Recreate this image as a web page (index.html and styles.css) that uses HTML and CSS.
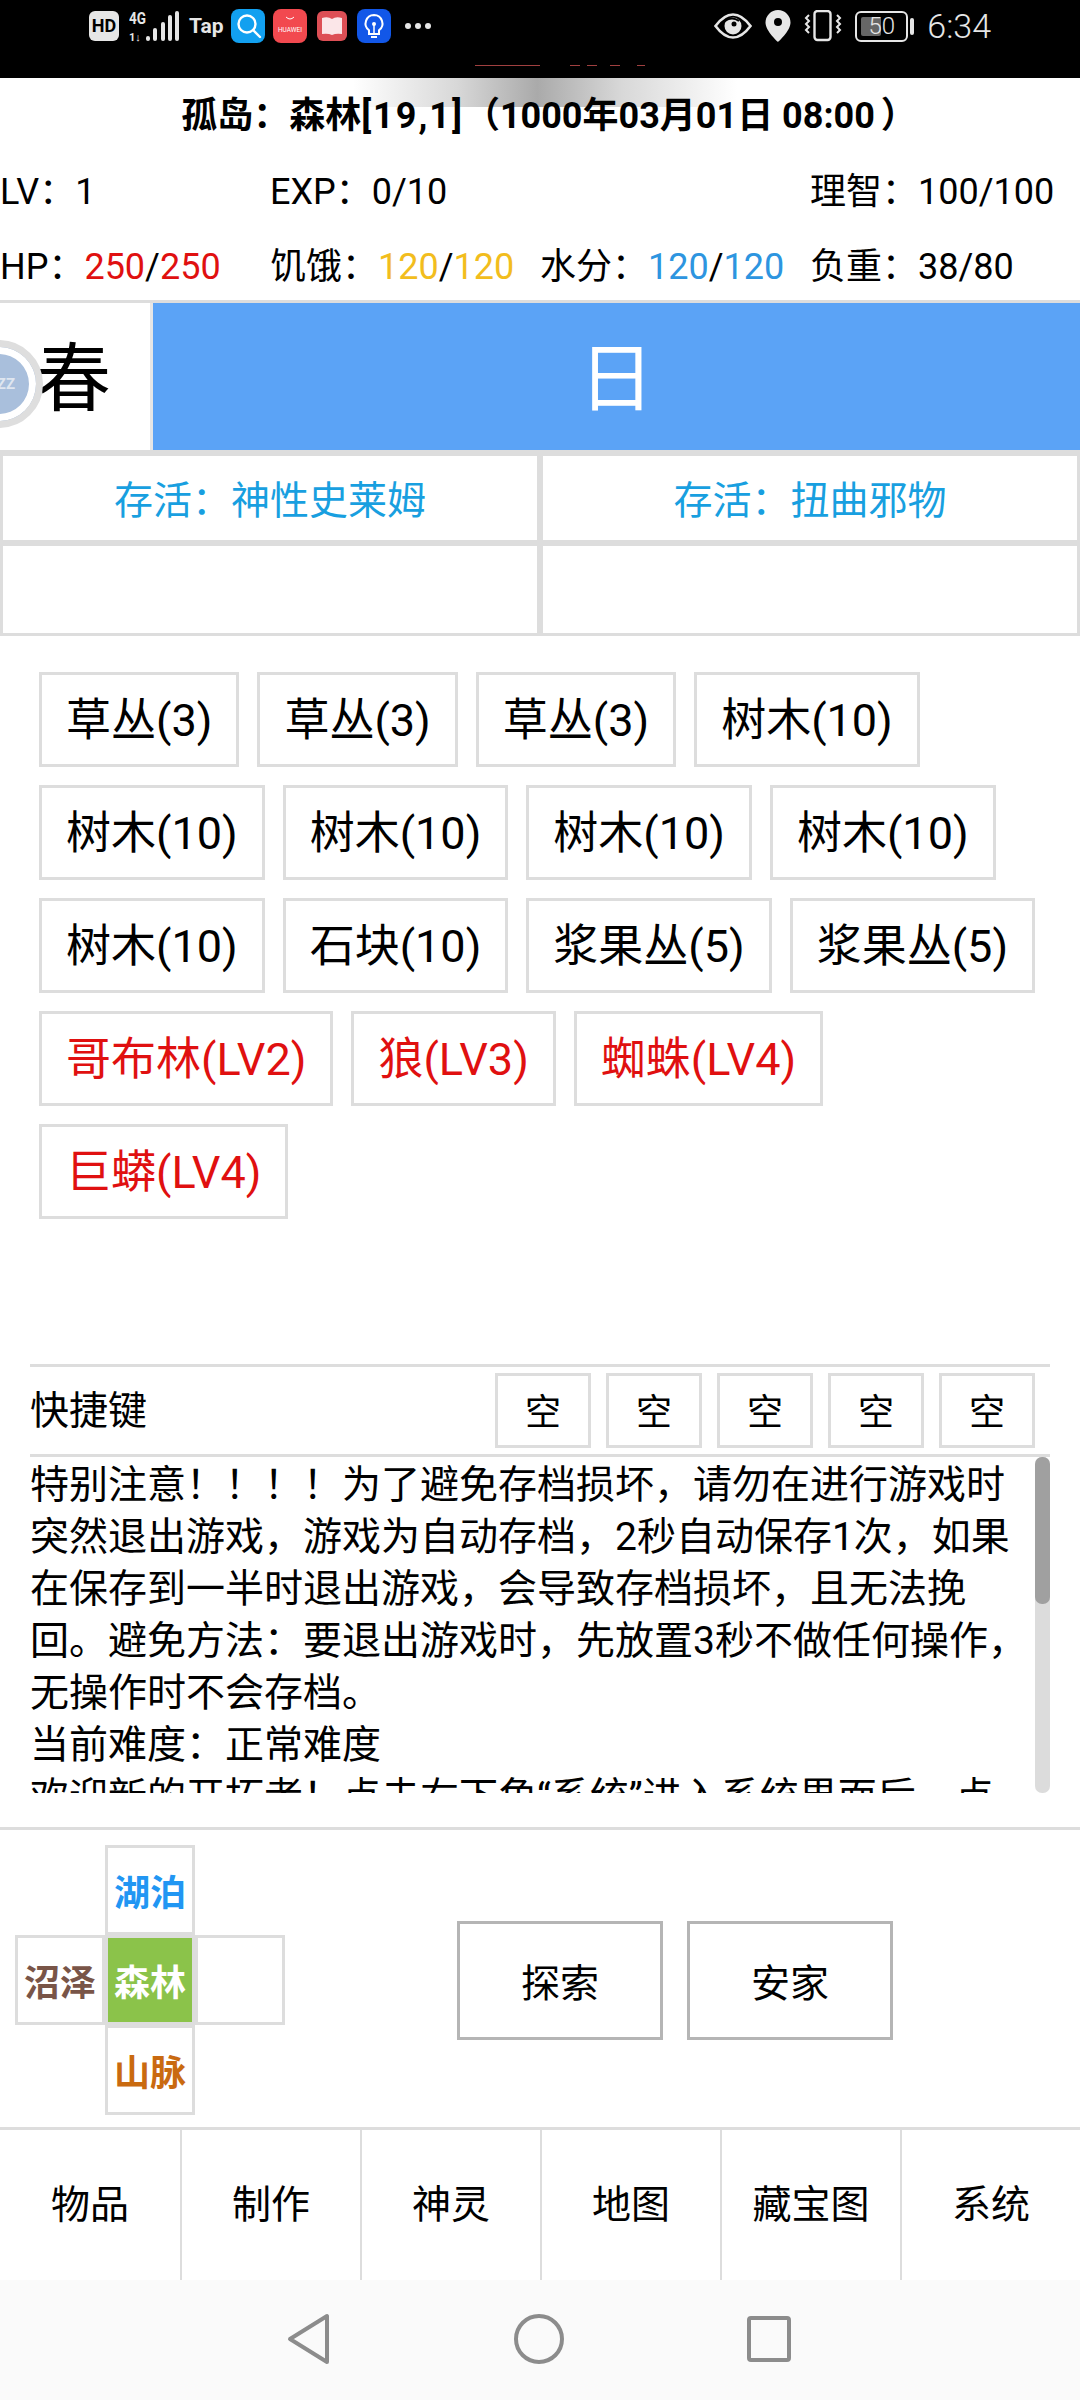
FILE: index.html
```html
<!DOCTYPE html>
<html lang="zh-CN">
<head>
<meta charset="utf-8">
<title>孤岛</title>
<link rel="stylesheet" href="styles.css">
</head>
<body>
<div class="phone">
  <header class="statusbar">
    <div class="sb-left">
      <span class="hd">HD</span>
      <svg class="sig" width="50" height="32" viewBox="0 0 50 32">
        <text x="0" y="14" class="sig-t" textLength="17" lengthAdjust="spacingAndGlyphs">4G</text>
        <text x="0" y="31" class="sig-t small">1↓</text>
        <rect x="17" y="26" width="4" height="5" rx="2" fill="#e6e6e6"/>
        <rect x="24" y="18" width="4" height="13" rx="2" fill="#e6e6e6"/>
        <rect x="32" y="12" width="4" height="19" rx="2" fill="#e6e6e6"/>
        <rect x="39" y="5" width="4" height="26" rx="2" fill="#e6e6e6"/>
        <rect x="46" y="1" width="4" height="30" rx="2" fill="#e6e6e6"/>
      </svg>
      <span class="tap">Tap</span>
      <svg class="app search" width="34" height="34" viewBox="0 0 34 34"><rect width="34" height="34" rx="8" fill="#12a0f0"/><circle cx="16" cy="15" r="8.5" fill="none" stroke="#fff" stroke-width="2.4"/><path d="M22 21l7 7" stroke="#fff" stroke-width="2.4" stroke-linecap="round"/></svg>
      <svg class="app" width="34" height="34" viewBox="0 0 34 34"><rect width="34" height="34" rx="8" fill="#f2494f"/><path d="M13 8q4 4 8 0" stroke="#fff" fill="none" stroke-width="1"/><text x="17" y="23" class="hw">HUAWEI</text></svg>
      <svg class="app" width="30" height="30" viewBox="0 0 30 30"><rect width="30" height="30" rx="6" fill="#dd4f55"/><path d="M5 7q6-2 10 1q4-3 10-1v16q-6-1-10 1q-4-2-10-1z" fill="#fbe6e8"/></svg>
      <svg class="app" width="34" height="34" viewBox="0 0 34 34"><rect width="34" height="34" rx="8" fill="#1257e8"/><path d="M17 6a8.500 8.500 0 0 0-5 15.300v3.700h10v-3.700a8.500 8.500 0 0 0-5-15.300z" fill="none" stroke="#fff" stroke-width="2"/><path d="M14 28h6" stroke="#fff" stroke-width="2"/><circle cx="17" cy="15" r="2" fill="#fff"/><path d="M17 15v9" stroke="#fff" stroke-width="1.500"/></svg>
      <span class="dots"><i></i><i></i><i></i></span>
    </div>
    <div class="sb-right">
      <svg width="38" height="26" viewBox="0 0 38 26"><path d="M1.500 13Q10 1.500 19 1.500T36.500 13Q28 24.500 19 24.500T1.500 13z" fill="none" stroke="#e6e6e6" stroke-width="2.600"/><circle cx="19" cy="13" r="8.500" fill="#e6e6e6"/><path d="M11 8q7-5 14 0" stroke="#000" stroke-width="2" fill="none"/><circle cx="20" cy="11" r="2.500" fill="#000"/></svg>
      <svg width="26" height="32" viewBox="0 0 26 32"><path d="M13 0a12.500 12.500 0 0 0-12.500 12.500C.5 21 13 32 13 32s12.500-11 12.500-19.500A12.500 12.500 0 0 0 13 0z" fill="#e6e6e6"/><circle cx="13" cy="12" r="4" fill="#000"/></svg>
      <svg width="38" height="32" viewBox="0 0 38 32"><rect x="10.500" y="1" width="16" height="29" rx="3" fill="none" stroke="#e6e6e6" stroke-width="2.400"/><path d="M5 5l-3 3 3 3-3 3 3 3-3 3 3 3M33 5l3 3-3 3 3 3-3 3 3 3-3 3" fill="none" stroke="#e6e6e6" stroke-width="2"/></svg>
      <span class="batt"><span class="batt-box"><span class="batt-fill"></span><span class="batt-t">50</span></span><i class="batt-tip"></i></span>
      <span class="clock">6:34</span>
    </div>
    <div class="peek"></div>
  </header>

  <main class="game">
    <h1 class="title">孤岛：森林<span class="coords">[19,1]</span>（1000年03月01日 08:00<span class="close">）</span></h1>
    <section class="stats">
      <div>LV：1</div><div>EXP：0/10</div><div></div><div>理智：100/100</div>
      <div>HP：<span class="red">250</span>/<span class="red">250</span></div>
      <div>饥饿：<span class="yellow">120</span>/<span class="yellow">120</span></div>
      <div>水分：<span class="blue">120</span>/<span class="blue">120</span></div>
      <div>负重：38/80</div>
    </section>

    <section class="time">
      <div class="season">春</div>
      <div class="daypart">日</div>
      <div class="bubble"><span>ZZ</span></div>
    </section>

    <section class="tasks">
      <div class="task">存活：神性史莱姆</div>
      <div class="task">存活：扭曲邪物</div>
      <div class="task"></div>
      <div class="task"></div>
    </section>

    <section class="chips">
      <span class="chip">草丛(3)</span><span class="chip">草丛(3)</span><span class="chip">草丛(3)</span><span class="chip">树木(10)</span>
      <span class="chip">树木(10)</span><span class="chip">树木(10)</span><span class="chip">树木(10)</span><span class="chip">树木(10)</span>
      <span class="chip">树木(10)</span><span class="chip">石块(10)</span><span class="chip">浆果丛(5)</span><span class="chip">浆果丛(5)</span>
      <span class="chip foe">哥布林(LV2)</span><span class="chip foe">狼(LV3)</span><span class="chip foe">蜘蛛(LV4)</span>
      <span class="chip foe">巨蟒(LV4)</span>
    </section>

    <section class="quick">
      <span class="quick-label">快捷键</span>
      <div class="quick-slots"><span class="slot">空</span><span class="slot">空</span><span class="slot">空</span><span class="slot">空</span><span class="slot">空</span></div>
    </section>

    <section class="log">
      <div class="log-text">特别注意！！！！为了避免存档损坏，请勿在进行游戏时突然退出游戏，游戏为自动存档，2秒自动保存1次，如果在保存到一半时退出游戏，会导致存档损坏，且无法挽回。避免方法：要退出游戏时，先放置3秒不做任何操作，无操作时不会存档。<br>当前难度：正常难度<br>欢迎新的开拓者！点击右下角“系统”进入系统界面后，点</div>
      <div class="scrollbar"><div class="thumb"></div></div>
    </section>

    <section class="controls">
      <div class="compass">
        <span class="cell n lake">湖泊</span>
        <span class="cell w swamp">沼泽</span>
        <span class="cell c here">森林</span>
        <span class="cell e"></span>
        <span class="cell s mount">山脉</span>
      </div>
      <div class="actions"><span class="action">探索</span><span class="action">安家</span></div>
    </section>

    <nav class="tabs">
      <span class="tab">物品</span><span class="tab">制作</span><span class="tab">神灵</span><span class="tab">地图</span><span class="tab">藏宝图</span><span class="tab">系统</span>
    </nav>
  </main>

  <footer class="navbar">
    <svg width="46" height="52" viewBox="0 0 46 52"><path d="M41 3v46L4 26z" fill="none" stroke="#8c8c8c" stroke-width="4" stroke-linejoin="round"/></svg>
    <svg width="50" height="52" viewBox="0 0 50 52"><circle cx="25" cy="26" r="23" fill="none" stroke="#8c8c8c" stroke-width="4"/></svg>
    <svg width="46" height="52" viewBox="0 0 46 52"><rect x="3" y="5" width="40" height="42" rx="2" fill="none" stroke="#8c8c8c" stroke-width="4"/></svg>
  </footer>
</div>
</body>
</html>
```

FILE: styles.css
```css
* { box-sizing: border-box; }
html, body { margin: 0; padding: 0; background: #fff; }
.phone {
  width: 1080px; height: 2400px; overflow: hidden; display: flex; flex-direction: column;
  font-family: Roboto, "Noto Sans CJK SC", sans-serif; color: #000; text-spacing-trim: space-all;
}
.statusbar {
  position: relative; height: 78px; flex: none; background: #000; display: flex; justify-content: space-between;
  padding: 9px 89px 0 89px; color: #e6e6e6;
}
.sb-left, .sb-right { display: flex; align-items: center; height: 34px; }
.sb-left { gap: 10px; }
.sb-right { gap: 13px; }
.hd { flex: none; width: 30px; height: 30px; border-radius: 6px; background: #e6e6e6; color: #000; font: 700 18px/30px Roboto, sans-serif; text-align: center; }
.sig-t { font: 700 16px Roboto, sans-serif; fill: #e6e6e6; }
.sig-t.small { font-size: 11px; }
.tap { font: 700 21px/34px Roboto, sans-serif; color: #e6e6e6; margin-right: -3px; }
.search { margin-right: -2px; }
.hw { font: 6.500px Roboto, sans-serif; fill: #fff; text-anchor: middle; }
.dots { display: flex; gap: 4px; margin-left: 4px; }
.dots i { width: 6px; height: 6px; border-radius: 50%; background: #e6e6e6; }
.batt { display: flex; align-items: center; gap: 2px; }
.batt-box { position: relative; width: 53px; height: 31px; border: 2px solid #e6e6e6; border-radius: 6px; display: block; }
.batt-fill { position: absolute; left: 4px; top: 4px; bottom: 4px; width: 20px; background: #666; border-radius: 2px; }
.batt-t { position: absolute; inset: 0; font: 300 24px/27px Roboto, sans-serif; text-align: center; color: #e6e6e6; }
.batt-tip { width: 4px; height: 17px; background: #e6e6e6; border-radius: 2px; }
.clock { font: 300 34px/34px Roboto, sans-serif; }
.peek {
  position: absolute; left: 475px; top: 65px; width: 172px; height: 1px;
  background: linear-gradient(90deg, #a04040 0 65px, transparent 65px 95px, #a04040 95px 105px, transparent 105px 112px, #a04040 112px 122px, transparent 122px 135px, #a04040 135px 145px, transparent 145px 162px, #a04040 162px 170px, transparent 170px);
}

.game { flex: 1; display: flex; flex-direction: column; min-height: 0; }
.title {
  position: relative; isolation: isolate;
  margin: 0; height: 74px; padding-top: 3px; font-size: 36px; font-weight: 700; line-height: 71px; text-align: center; white-space: nowrap;
}
.title::before {
  content: ""; position: absolute; left: 353px; top: 0; width: 384px; height: 29px; z-index: -1;
  background: linear-gradient(90deg, #fff, #d8d8d8 27%, #aaa 48%, #d8d8d8 70%, #fff);
}
.coords { letter-spacing: 2px; }
.close { margin-left: 6px; margin-right: -18px; }
.stats { display: grid; grid-template-columns: repeat(4, 270px); grid-auto-rows: 75px; height: 150px; font-size: 36px; white-space: nowrap; }
.stats > div { padding-top: 6px; line-height: 69px; }
.red { color: #e01010; }
.yellow { color: #f2bd1d; }
.blue { color: #2d95e0; }

.time { position: relative; display: flex; height: 153px; border-top: 3px solid #ddd; border-bottom: 3px solid #ddd; margin-top: -2px; overflow: hidden; }
.season { width: 153px; border-right: 3px solid #e6e6e6; font-size: 75px; padding: 6px 0 0 36px; line-height: 141px; }
.daypart { flex: 1; background: #5ba3f6; color: #fff; font-size: 75px; padding-top: 6px; line-height: 141px; text-align: center; }
.bubble {
  position: absolute; left: -45px; top: 37px; width: 88px; height: 88px; border-radius: 50%;
  background: #a9bfdc; border: 7px solid #dedede; display: flex; align-items: center; justify-content: flex-end;
  box-shadow: inset 0 0 0 7px #fff; padding-right: 21px;
}
.bubble span { font: 700 15px Roboto, sans-serif; color: #dfe6f0; }

.tasks { display: grid; grid-template-columns: 1fr 1fr; grid-template-rows: 90px 93px; }
.task { border: 3px solid #ddd; font-size: 39px; padding-top: 6px; line-height: 78px; text-align: center; color: #189fe0; }

.chips { display: flex; flex-wrap: wrap; align-content: flex-start; gap: 18px; padding: 36px 30px 0 39px; height: 728px; }
.chip { height: 95px; padding: 3px 24px 0; border: 3px solid #ddd; font-size: 45px; line-height: 86px; white-space: nowrap; }
.foe { color: #e01010; }

.quick { display: flex; justify-content: space-between; align-items: center; height: 93px; margin: 0 30px; border-top: 3px solid #ddd; border-bottom: 3px solid #ddd; padding-right: 15px; }
.quick-label { font-size: 39px; line-height: 70px; }
.quick-slots { display: flex; gap: 15px; }
.slot { width: 96px; height: 75px; border: 3px solid #ddd; font-size: 36px; line-height: 75px; text-align: center; }

.log { position: relative; margin: 0 30px; height: 336px; }
.log-text { height: 336px; overflow: hidden; width: 1005px; font-size: 39px; line-height: 52px; padding-top: 2px; }
.scrollbar { position: absolute; top: 0; right: 0; width: 15px; height: 336px; background: #dcdcdc; border-radius: 7px; }
.thumb { height: 147px; background: #a0a0a0; border-radius: 7px; }

.controls { display: flex; height: 300px; border-top: 3px solid #ddd; margin-top: 34px; }
.compass { display: grid; grid-template-columns: repeat(3, 90px); grid-template-rows: repeat(3, 90px); margin: 15px 0 0 15px; width: 270px; height: 270px; }
.cell { border: 3px solid #ddd; font-size: 36px; font-weight: 700; padding-top: 6px; line-height: 80px; text-align: center; white-space: nowrap; overflow: hidden; }
.n { grid-area: 1 / 2; }
.w { grid-area: 2 / 1; }
.c { grid-area: 2 / 2; }
.e { grid-area: 2 / 3; }
.s { grid-area: 3 / 2; }
.lake { color: #2196f3; }
.swamp { color: #795548; }
.here { background: #8bc34a; color: #fff; }
.mount { color: #c96a10; }
.actions { display: flex; gap: 24px; margin: 91px 0 0 172px; }
.action { width: 206px; height: 119px; border: 3px solid #b5b5b5; font-size: 39px; padding-top: 6px; line-height: 108px; text-align: center; }

.tabs { flex: 1; display: grid; grid-template-columns: repeat(6, 180px); border-top: 3px solid #ddd; }
.tab { border-left: 2px solid #ddd; font-size: 39px; line-height: 150px; text-align: center; }
.tab:first-child { border-left: 0; }

.navbar { height: 120px; flex: none; background: #fafafa; display: flex; align-items: center; padding: 0 0 2px 286px; gap: 182px; }
```
